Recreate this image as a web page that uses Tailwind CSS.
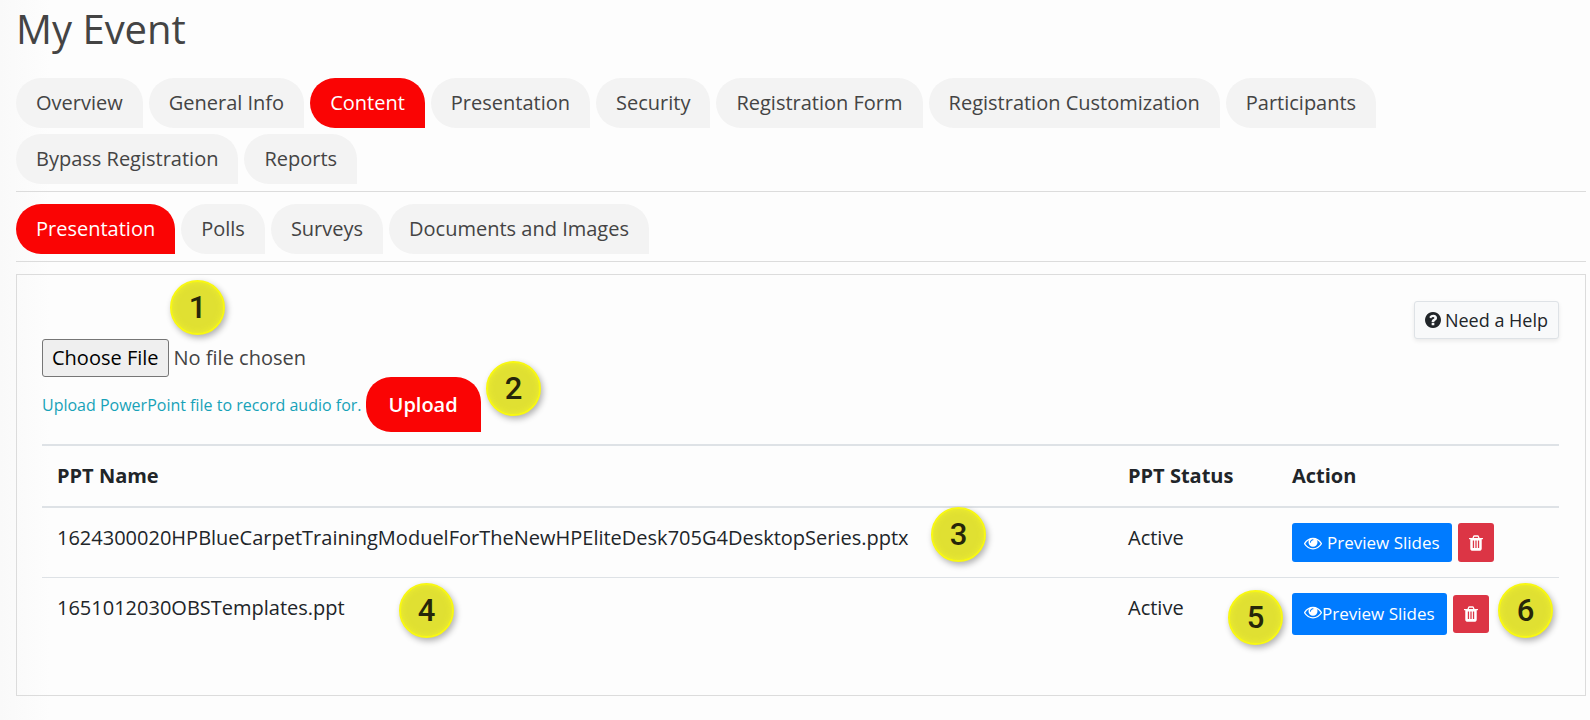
<!DOCTYPE html>
<html lang="en">
<head>
<meta charset="utf-8">
<meta name="viewport" content="width=device-width, initial-scale=1">
<title>My Event</title>
<script src="https://cdn.jsdelivr.net/npm/@tailwindcss/browser@4"></script>
</head>
<body class="min-h-screen bg-[#fdfdfd] bg-linear-to-r from-[#f9f9f9] to-[#fdfdfd] to-[50px] font-['Open_Sans',sans-serif] text-xl/[30px] text-[#444]">
<svg class="hidden" aria-hidden="true">
  <symbol id="eye" viewBox="0 0 1792 1792"><path d="M1664 960q-152-236-381-353 61 104 61 225 0 185-131.5 316.5t-316.5 131.5-316.5-131.5-131.5-316.5q0-121 61-225-229 117-381 353 133 205 333.5 326.5t434.5 121.5 434.5-121.5 333.5-326.5zm-720-384q0-20-14-34t-34-14q-125 0-214.5 89.5t-89.5 214.5q0 20 14 34t34 14 34-14 14-34q0-86 61-147t147-61q20 0 34-14t14-34zm848 384q0 34-20 69-140 230-376.5 368.5t-499.5 138.5-499.5-139-376.5-368q-20-35-20-69t20-69q140-229 376.5-368t499.5-139 499.5 139 376.5 368q20 35 20 69z"/></symbol>
  <symbol id="trash" viewBox="192 128 1408 1536"><path d="M704 1376v-704q0-14-9-23t-23-9h-64q-14 0-23 9t-9 23v704q0 14 9 23t23 9h64q14 0 23-9t9-23zm256 0v-704q0-14-9-23t-23-9h-64q-14 0-23 9t-9 23v704q0 14 9 23t23 9h64q14 0 23-9t9-23zm256 0v-704q0-14-9-23t-23-9h-64q-14 0-23 9t-9 23v704q0 14 9 23t23 9h64q14 0 23-9t9-23zm-544-992h448l-48-117q-7-9-17-11h-317q-10 2-17 11zm928 32v64q0 14-9 23t-23 9h-96v948q0 83-47 143.5t-113 60.5h-832q-66 0-113-58.5t-47-141.5v-952h-96q-14 0-23-9t-9-23v-64q0-14 9-23t23-9h309l70-167q15-37 54-63t79-26h320q40 0 79 26t54 63l70 167h309q14 0 23 9t9 23z"/></symbol>
  <symbol id="question" viewBox="128 128 1536 1536"><path d="M1024 1376v-192q0-14-9-23t-23-9h-192q-14 0-23 9t-9 23v192q0 14 9 23t23 9h192q14 0 23-9t9-23zm256-672q0-88-55.5-163t-138.5-116-170-41q-243 0-371 213-15 24 8 42l132 100q7 6 19 6 16 0 25-12 53-68 86-92 34-24 86-24 48 0 85.5 26t37.5 59q0 38-20 61t-68 45q-63 28-115.5 86.5t-52.5 125.5v36q0 14 9 23t23 9h192q14 0 23-9t9-23q0-19 21.5-49.5t54.5-49.5q32-18 49-28.5t46-35 44.5-48 28-60.5 12.5-81zm384 192q0 209-103 385.5t-279.5 279.5-385.5 103-385.5-103-279.5-279.5-103-385.5 103-385.5 279.5-279.5 385.5-103 385.5 103 279.5 279.5 103 385.5z"/></symbol>
</svg>

<main class="relative pt-[5px] pr-1 pl-4">
  <h1 class="mb-[25px] text-[40px]/[48px]">My Event</h1>

  <nav aria-label="Event sections" class="flex flex-wrap gap-1.5 border-b border-[#dcdcdc] pr-[200px] pb-[7px]">
    <a href="#" class="rounded-[25px] rounded-br-none bg-[#f3f3f3] px-5 py-2.5">Overview</a>
    <a href="#" class="rounded-[25px] rounded-br-none bg-[#f3f3f3] px-5 py-2.5">General Info</a>
    <a href="#" aria-current="page" class="rounded-[25px] rounded-br-none bg-[#fa0404] px-5 py-2.5 font-medium text-white">Content</a>
    <a href="#" class="rounded-[25px] rounded-br-none bg-[#f3f3f3] px-5 py-2.5">Presentation</a>
    <a href="#" class="rounded-[25px] rounded-br-none bg-[#f3f3f3] px-5 py-2.5">Security</a>
    <a href="#" class="rounded-[25px] rounded-br-none bg-[#f3f3f3] px-5 py-2.5">Registration Form</a>
    <a href="#" class="rounded-[25px] rounded-br-none bg-[#f3f3f3] px-5 py-2.5">Registration Customization</a>
    <a href="#" class="rounded-[25px] rounded-br-none bg-[#f3f3f3] px-5 py-2.5">Participants</a>
    <a href="#" class="rounded-[25px] rounded-br-none bg-[#f3f3f3] px-5 py-2.5">Bypass Registration</a>
    <a href="#" class="rounded-[25px] rounded-br-none bg-[#f3f3f3] px-5 py-2.5">Reports</a>
  </nav>

  <nav aria-label="Content sections" class="mt-3 flex flex-wrap gap-1.5 border-b border-[#dcdcdc] pb-[7px]">
    <a href="#" aria-current="page" class="rounded-[25px] rounded-br-none bg-[#fa0404] px-5 py-2.5 font-medium text-white">Presentation</a>
    <a href="#" class="rounded-[25px] rounded-br-none bg-[#f3f3f3] px-5 py-2.5">Polls</a>
    <a href="#" class="rounded-[25px] rounded-br-none bg-[#f3f3f3] px-5 py-2.5">Surveys</a>
    <a href="#" class="rounded-[25px] rounded-br-none bg-[#f3f3f3] px-5 py-2.5">Documents and Images</a>
  </nav>

  <section class="mt-3 border border-[#dcdcdc] pt-[26px] pr-[26px] pb-[45px] pl-[25px]">
    <div class="flex justify-end">
      <button type="button" class="flex h-[38px] items-center gap-1 rounded-[3px] border border-[#dee2e6] bg-[#f8f9fa] px-2.5 text-lg text-[#212529] shadow-[0_2px_4px_rgba(0,0,0,0.08)]">
        <svg class="size-4 fill-current"><use href="#question"/></svg>Need a Help
      </button>
    </div>
    <form>
      <input id="ppt" type="file" aria-label="Presentation file" class="block h-[38px] w-[400px] file:mr-[5px] file:h-[38px] file:rounded-[3px] file:border file:border-solid file:border-[#767676] file:bg-[#efefef] file:px-[9px] file:text-black">
      <div class="flex items-center gap-1">
        <label for="ppt" class="text-base text-[#17a2b8]">Upload PowerPoint file to record audio for.</label>
        <button type="submit" class="h-[55px] rounded-[25px] rounded-br-none bg-[#fa0404] px-[23px] font-semibold text-white">Upload</button>
      </div>
    </form>
    <table class="mt-3 w-full border-collapse text-left text-[#212529]">
      <thead>
        <tr class="border-y-2 border-[#dee2e6]">
          <th class="px-[15px] py-[15px] font-bold">PPT Name</th>
          <th class="w-[164px] px-[15px] py-[15px] font-bold">PPT Status</th>
          <th class="w-[282px] px-[15px] py-[15px] font-bold">Action</th>
        </tr>
      </thead>
      <tbody>
        <tr class="border-b border-[#dee2e6] align-top">
          <td class="px-[15px] py-[15px]">1624300020HPBlueCarpetTrainingModuelForTheNewHPEliteDesk705G4DesktopSeries.pptx</td>
          <td class="px-[15px] py-[15px]">Active</td>
          <td class="px-[15px] py-[15px]">
            <div class="flex items-center gap-1.5">
              <button type="button" class="flex h-[39px] items-center gap-[5px] rounded-[3px] bg-[#007bff] px-3 text-[17px] text-white"><svg class="size-[18px] fill-current"><use href="#eye"/></svg>Preview Slides</button>
              <button type="button" aria-label="Delete" class="flex h-[39px] w-9 items-center justify-center rounded-[3px] bg-[#dc3545] text-white"><svg class="h-4 w-[14px] fill-current"><use href="#trash"/></svg></button>
            </div>
          </td>
        </tr>
        <tr class="align-top">
          <td class="px-[15px] py-[15px]">1651012030OBSTemplates.ppt</td>
          <td class="px-[15px] py-[15px]">Active</td>
          <td class="px-[15px] py-[15px]">
            <div class="flex items-center gap-1.5">
              <button type="button" class="flex h-[42px] items-center rounded-[3px] bg-[#007bff] px-3 text-[17px] text-white"><svg class="mb-1 size-[18px] fill-current"><use href="#eye"/></svg>Preview Slides</button>
              <button type="button" aria-label="Delete" class="flex h-[38px] w-9 items-center justify-center rounded-[3px] bg-[#dc3545] text-white"><svg class="h-4 w-[14px] fill-current"><use href="#trash"/></svg></button>
            </div>
          </td>
        </tr>
      </tbody>
    </table>
  </section>

  <!-- Step markers floating over the page -->
  <div class="font-[Roboto,sans-serif] text-[31px] font-medium text-[#26260a]">
    <span class="absolute top-[280px] left-[170px] flex size-[55px] items-center justify-center rounded-full border-2 border-[#f8f812] bg-[#e0e032] shadow-[inset_0_0_6px_#efef30,2px_3px_6px_rgba(0,0,0,0.3)]">1</span>
    <span class="absolute top-[361px] left-[486px] flex size-[55px] items-center justify-center rounded-full border-2 border-[#f8f812] bg-[#e0e032] shadow-[inset_0_0_6px_#efef30,2px_3px_6px_rgba(0,0,0,0.3)]">2</span>
    <span class="absolute top-[507px] left-[931px] flex size-[55px] items-center justify-center rounded-full border-2 border-[#f8f812] bg-[#e0e032] shadow-[inset_0_0_6px_#efef30,2px_3px_6px_rgba(0,0,0,0.3)]">3</span>
    <span class="absolute top-[583px] left-[399px] flex size-[55px] items-center justify-center rounded-full border-2 border-[#f8f812] bg-[#e0e032] shadow-[inset_0_0_6px_#efef30,2px_3px_6px_rgba(0,0,0,0.3)]">4</span>
    <span class="absolute top-[590px] right-[307px] flex size-[55px] items-center justify-center rounded-full border-2 border-[#f8f812] bg-[#e0e032] shadow-[inset_0_0_6px_#efef30,2px_3px_6px_rgba(0,0,0,0.3)]">5</span>
    <span class="absolute top-[583px] right-[37px] flex size-[55px] items-center justify-center rounded-full border-2 border-[#f8f812] bg-[#e0e032] shadow-[inset_0_0_6px_#efef30,2px_3px_6px_rgba(0,0,0,0.3)]">6</span>
  </div>
</main>
</body>
</html>
